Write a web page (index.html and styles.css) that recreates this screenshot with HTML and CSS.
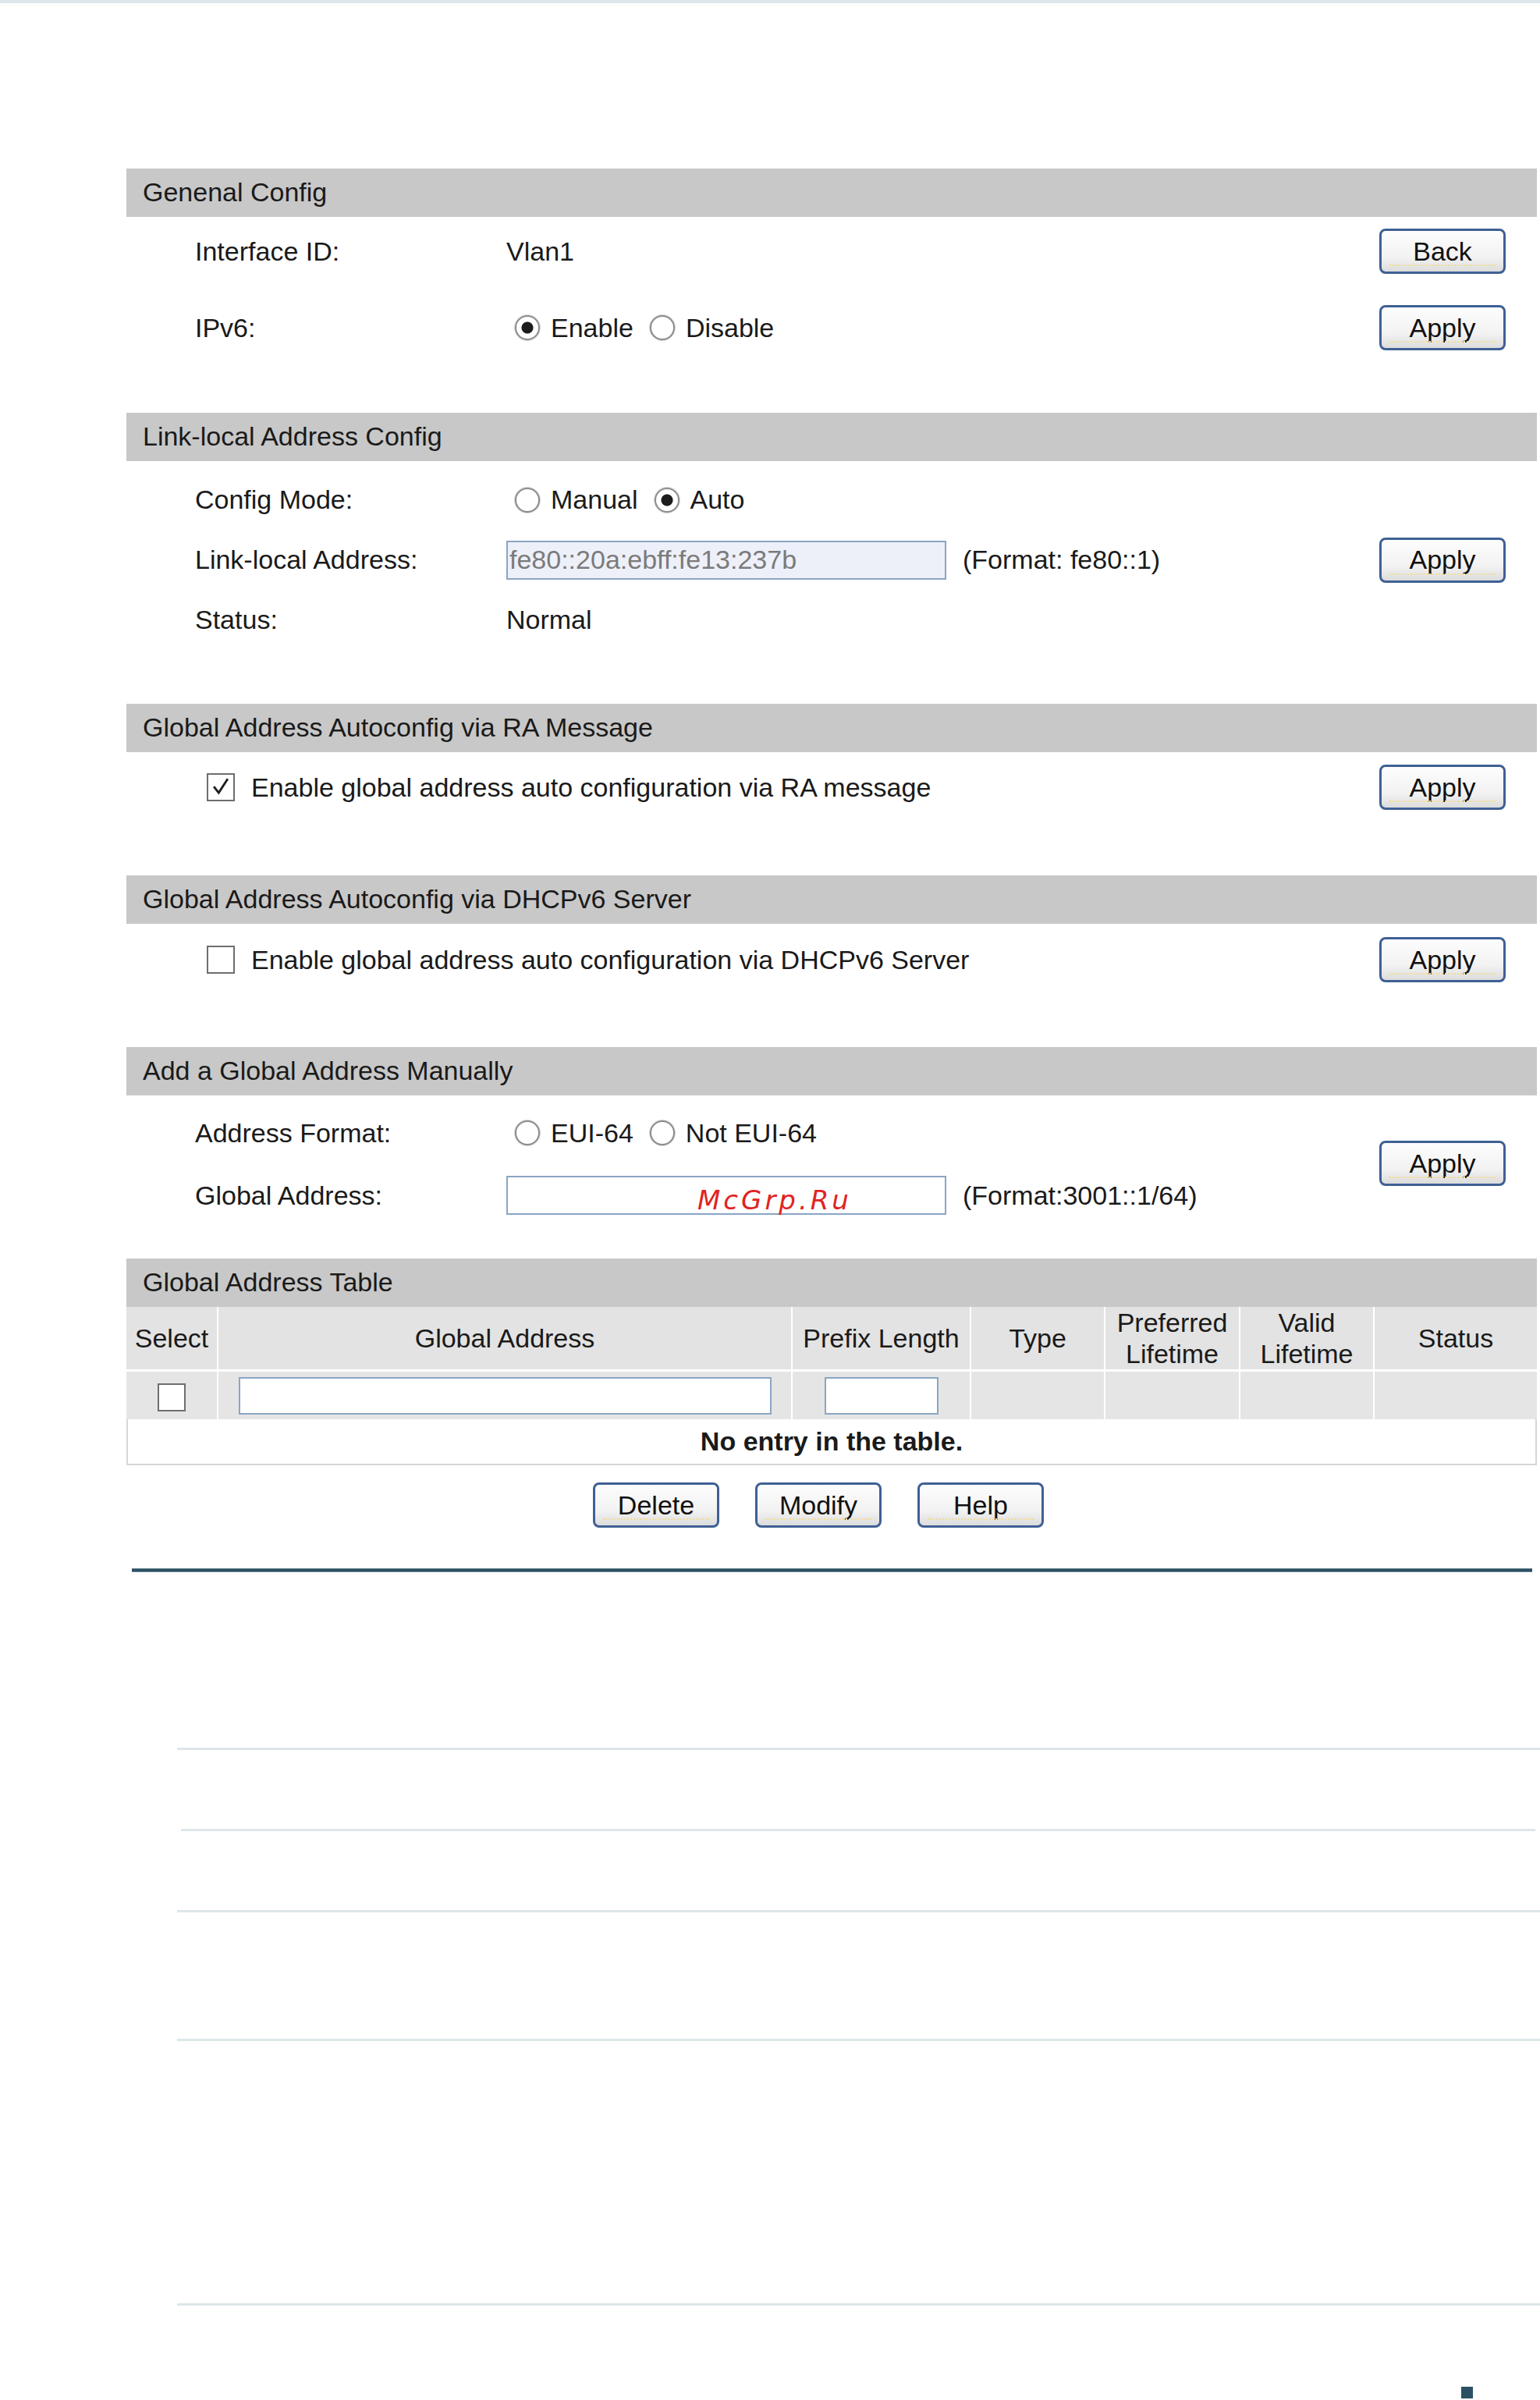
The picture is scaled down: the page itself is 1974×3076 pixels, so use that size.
FILE: index.html
```html
<!DOCTYPE html>
<html lang="en">
<head>
  <meta charset="UTF-8">
  <title>IPv6 Config</title>
  <link rel="stylesheet" href="styles.css">
</head>
<body>
  <div class="page-top"></div>

  <div class="panel">
    <!-- General -->
    <div class="section-head">Genenal Config</div>
    <div class="section-body body-general">
      <div class="label">Interface ID:</div>
      <div class="value">Vlan1</div>
      <button class="btn">Back</button>

      <div class="label">IPv6:</div>
      <div class="value">
        <label class="choice"><span class="radio on"></span>Enable</label>
        <label class="choice"><span class="radio"></span>Disable</label>
      </div>
      <button class="btn">Apply</button>
    </div>

    <!-- Link-local -->
    <div class="section-head">Link-local Address Config</div>
    <div class="section-body body-link">
      <div class="label">Config Mode:</div>
      <div class="value">
        <label class="choice"><span class="radio"></span>Manual</label>
        <label class="choice"><span class="radio on"></span>Auto</label>
      </div>
      <div></div>

      <div class="label">Link-local Address:</div>
      <div class="value">
        <input class="field readonly" type="text" value="fe80::20a:ebff:fe13:237b" readonly>
        <span class="hint">(Format: fe80::1)</span>
      </div>
      <button class="btn">Apply</button>

      <div class="label">Status:</div>
      <div class="value">Normal</div>
      <div></div>
    </div>

    <!-- RA -->
    <div class="section-head">Global Address Autoconfig via RA Message</div>
    <div class="section-body body-ra">
      <label class="check-line">
        <span class="checkbox">
          <svg viewBox="0 0 36 36" width="32" height="32"><path d="M8 17 L15 26 L28 6" fill="none" stroke="#1d1d1d" stroke-width="3.2"/></svg>
        </span>
        Enable global address auto configuration via RA message
      </label>
      <button class="btn">Apply</button>
    </div>

    <!-- DHCPv6 -->
    <div class="section-head">Global Address Autoconfig via DHCPv6 Server</div>
    <div class="section-body body-dhcp">
      <label class="check-line">
        <span class="checkbox"></span>
        Enable global address auto configuration via DHCPv6 Server
      </label>
      <button class="btn">Apply</button>
    </div>

    <!-- Manual -->
    <div class="section-head">Add a Global Address Manually</div>
    <div class="section-body body-manual">
      <div class="label">Address Format:</div>
      <div class="value">
        <label class="choice"><span class="radio"></span>EUI-64</label>
        <label class="choice"><span class="radio"></span>Not EUI-64</label>
      </div>
      <button class="btn btn-span">Apply</button>

      <div class="label">Global Address:</div>
      <div class="value">
        <span class="field-wrap">
          <input class="field" type="text">
          <span class="stamp">McGrp.Ru</span>
        </span>
        <span class="hint">(Format:3001::1/64)</span>
      </div>
    </div>

    <!-- Table -->
    <div class="section-head">Global Address Table</div>
    <table class="addr-table">
      <colgroup>
        <col class="c-select">
        <col class="c-addr">
        <col class="c-prefix">
        <col class="c-type">
        <col class="c-pref">
        <col class="c-valid">
        <col class="c-status">
      </colgroup>
      <thead>
        <tr>
          <th>Select</th>
          <th>Global Address</th>
          <th>Prefix Length</th>
          <th>Type</th>
          <th>Preferred<br>Lifetime</th>
          <th>Valid<br>Lifetime</th>
          <th>Status</th>
        </tr>
      </thead>
      <tbody>
        <tr class="edit-row">
          <td><span class="checkbox small"></span></td>
          <td><input class="cell-field addr" type="text"></td>
          <td><input class="cell-field prefix" type="text"></td>
          <td></td>
          <td></td>
          <td></td>
          <td></td>
        </tr>
        <tr class="empty-row">
          <td colspan="7">No entry in the table.</td>
        </tr>
      </tbody>
    </table>

    <div class="actions">
      <button class="btn">Delete</button>
      <button class="btn">Modify</button>
      <button class="btn">Help</button>
    </div>
  </div>

  <div class="dark-rule"></div>

  <div class="rules">
    <hr>
    <hr>
    <hr>
    <hr>
    <hr>
  </div>

  <div class="page-mark"></div>
</body>
</html>
```

FILE: styles.css
```css
body {
  margin: 0;
  width: 1974px;
  min-height: 3076px;
  background: #ffffff;
  color: #1a1a1a;
  font-family: "Liberation Sans", Arial, sans-serif;
  font-size: 34px;
  overflow: hidden;
}

.page-top {
  height: 4px;
  background: #dde6ea;
}

.panel {
  margin: 212px 0 0 162px;
  width: 1808px;
}

/* grey section title bars */
.section-head {
  height: 62px;
  background: #c8c8c8;
  padding-left: 21px;
  display: flex;
  align-items: center;
  padding-bottom: 2px;
  box-sizing: border-box;
}

.section-body {
  display: grid;
  grid-template-columns: 399px 1fr 162px;
  padding: 0 40px 0 88px;
  align-items: center;
}

.body-general {
  grid-auto-rows: 88px;
  row-gap: 10px;
  margin-bottom: 65px;
}

.body-link {
  grid-auto-rows: 77px;
  padding-top: 11px;
  margin-bottom: 69px;
}

.body-ra {
  grid-auto-rows: 88px;
  padding-top: 1px;
  margin-bottom: 69px;
}

.body-dhcp {
  grid-auto-rows: 88px;
  padding-top: 2px;
  margin-bottom: 68px;
}

.body-manual {
  grid-auto-rows: 80px;
  padding-top: 8px;
  margin-bottom: 41px;
}

.value {
  display: flex;
  align-items: center;
}

.choice {
  display: inline-flex;
  align-items: center;
  gap: 14px;
  margin-left: 11px;
}

.choice + .choice {
  margin-left: 21px;
}

.radio {
  width: 32px;
  height: 32px;
  box-sizing: border-box;
  border: 2px solid #8c8c8c;
  border-radius: 50%;
  background: #fff;
  box-shadow: 0 0 0 1px #d6d6d6;
}

.radio.on {
  background: radial-gradient(circle, #1c1c1c 0 7px, #ffffff 8px);
}

.check-line {
  grid-column: 1 / 3;
  display: flex;
  align-items: center;
  gap: 21px;
  margin-left: 15px;
}

.checkbox {
  width: 36px;
  height: 36px;
  box-sizing: border-box;
  border: 2px solid #6e6e6e;
  background: #fff;
  display: flex;
  align-items: center;
  justify-content: center;
}

.field {
  width: 564px;
  height: 50px;
  box-sizing: border-box;
  border: 2px solid #8aa5c4;
  padding: 0 2px;
  font: inherit;
  color: #1a1a1a;
  background: #fff;
}

.field.readonly {
  background: #eef0f9;
  color: #7b7b7b;
}

.hint {
  margin-left: 21px;
}

.field-wrap {
  position: relative;
  display: inline-block;
  height: 50px;
}

/* red site stamp laid over the address box */
.stamp {
  position: absolute;
  left: 245px;
  top: 11px;
  color: #e0241f;
  font-family: "DejaVu Sans", sans-serif;
  font-style: italic;
  font-size: 34px;
  letter-spacing: 4px;
  white-space: nowrap;
}

.btn {
  position: relative;
  justify-self: end;
  width: 162px;
  height: 58px;
  box-sizing: border-box;
  border: 3px solid #3f6094;
  border-radius: 8px;
  background: linear-gradient(#fdfdfd 0%, #f2f2f2 65%, #dcdcdc 100%);
  font: inherit;
  color: #111;
  padding: 0;
}

.btn::after {
  content: "";
  position: absolute;
  left: 10px;
  right: 10px;
  bottom: 7px;
  border-top: 2px dotted #f1dc9a;
}

.btn-span {
  grid-column: 3;
  grid-row: 1 / span 2;
  align-self: center;
  margin-top: -2px;
}

/* address table */
.addr-table {
  width: 1808px;
  border-collapse: separate;
  border-spacing: 0;
  table-layout: fixed;
}

.c-select { width: 118px; }
.c-addr { width: 736px; }
.c-prefix { width: 229px; }
.c-type { width: 172px; }
.c-pref { width: 173px; }
.c-valid { width: 172px; }
.c-status { width: 208px; }

.addr-table th {
  height: 79px;
  background: #e3e3e3;
  font-weight: normal;
  line-height: 40px;
  border-right: 2px solid #fff;
  padding: 0;
}

.addr-table th:last-child {
  border-right: none;
}

.edit-row td {
  height: 61px;
  background: #e5e5e5;
  border-top: 3px solid #fff;
  border-right: 2px solid #fff;
  padding: 0;
  text-align: center;
  vertical-align: middle;
}

.edit-row td:last-child {
  border-right: none;
}

.edit-row .checkbox {
  display: inline-block;
  vertical-align: middle;
}

.cell-field {
  height: 48px;
  box-sizing: border-box;
  border: 2px solid #8aa5c4;
  background: #fff;
  vertical-align: middle;
}

.cell-field.addr { width: 683px; }
.cell-field.prefix { width: 146px; }

.empty-row td {
  height: 57px;
  text-align: center;
  font-weight: bold;
  border: 2px solid #d6d6d6;
  border-top: none;
  padding: 0;
}

.actions {
  display: flex;
  justify-content: center;
  gap: 46px;
  margin-top: 22px;
  padding-right: 34px;
}

.dark-rule {
  margin: 52px 0 0 169px;
  width: 1795px;
  height: 5px;
  background: linear-gradient(#8aa1ae, #2b5063 25%, #2b5063 75%, #8aa1ae);
}

.rules {
  margin-left: 227px;
}

.rules hr {
  border: none;
  height: 3px;
  background: #dde6e8;
  margin: 0;
}

.rules hr:nth-child(1) { margin-top: 225px; }
.rules hr:nth-child(2) { margin-top: 101px; margin-left: 5px; margin-right: 6px; }
.rules hr:nth-child(3) { margin-top: 101px; }
.rules hr:nth-child(4) { margin-top: 162px; }
.rules hr:nth-child(5) { margin-top: 336px; }

.page-mark {
  margin: 104px 0 0 1873px;
  width: 15px;
  height: 15px;
  background: #2b5063;
}
```
